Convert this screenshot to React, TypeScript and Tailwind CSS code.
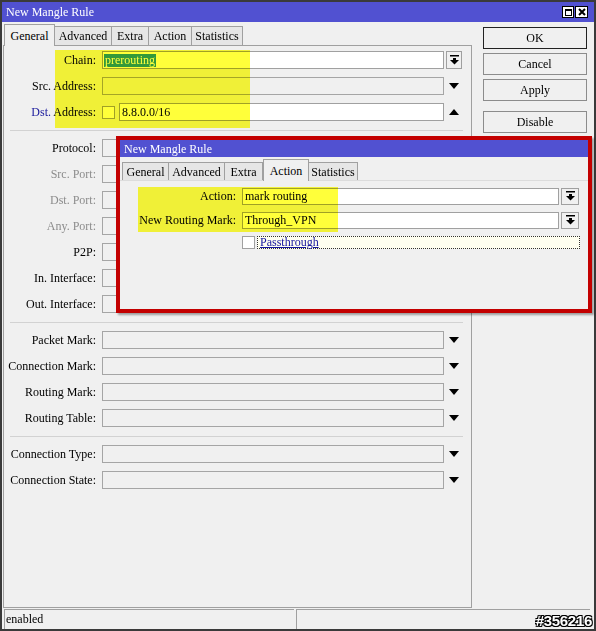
import React from "react";

const serif = "font-['Liberation_Serif',serif] text-[12px]";

function BarDown() {
  return (
    <svg width="9" height="10" viewBox="0 0 9 10">
      <rect x="0" y="0" width="9" height="1.5" fill="#000" />
      <rect x="3" y="3" width="3" height="2" fill="#000" />
      <polygon points="0,5 9,5 4.5,9.5" fill="#000" />
    </svg>
  );
}

function Tri({ up }: { up?: boolean }) {
  return (
    <svg width="10" height="6" viewBox="0 0 10 6">
      {up ? <polygon points="0,6 10,6 5,0" fill="#000" /> : <polygon points="0,0 10,0 5,6" fill="#000" />}
    </svg>
  );
}

function DropBtn({ h }: { h: string }) {
  return (
    <div className={`flex ${h} w-full items-center justify-center border border-[#a0a0a0] bg-[#f0f0f0]`}>
      <BarDown />
    </div>
  );
}

type ArrowKind = "btn" | "down" | "up";

function Row({
  label,
  gray,
  arrow = "down",
  children,
}: {
  label: React.ReactNode;
  gray?: boolean;
  arrow?: ArrowKind;
  children?: React.ReactNode;
}) {
  return (
    <div className="flex h-[26px] items-center">
      <div className={`w-[92px] whitespace-nowrap text-right ${gray ? "text-[#8c8c8c]" : "text-black"}`}>{label}</div>
      <div className="ml-[6px] flex h-[18px] w-[342px]">
        {children ?? <div className="h-full flex-1 border border-[#a5a5a5] bg-[#f0f0f0]" />}
      </div>
      <div className="ml-[2px] flex h-[18px] w-[16px] items-center justify-center">
        {arrow === "btn" ? <DropBtn h="h-[18px]" /> : <Tri up={arrow === "up"} />}
      </div>
    </div>
  );
}

function Divider() {
  return (
    <div className="flex h-[10px] items-center pl-[6px] pr-[8px]">
      <div className="h-0 w-full border-t border-[#d2d2d2]" />
    </div>
  );
}

function Tab({ label, w, active, small }: { label: string; w: string; active?: boolean; small?: boolean }) {
  if (active) {
    return (
      <div
        className={`relative z-10 -mb-px flex h-[22px] ${w} items-center justify-center border border-b-0 border-[#a0a0a0] bg-[#f0f0f0]`}
      >
        {label}
      </div>
    );
  }
  return (
    <div
      className={`flex ${small ? "h-[18px]" : "h-[19px]"} ${w} items-center justify-center border border-b-0 border-l-0 border-[#a0a0a0] bg-[#e6e6e6]`}
    >
      {label}
    </div>
  );
}

function TitleBar({ h, buttons }: { h: string; buttons?: boolean }) {
  return (
    <div className={`flex ${h} items-center justify-between bg-[#5151d1] pl-[2px] pr-[6px] text-white`}>
      <span className="pl-[2px]">New Mangle Rule</span>
      {buttons && (
        <div className="flex gap-[1px]">
          <div className="flex h-[12px] w-[12px] items-center justify-center border border-black bg-white">
            <div className="h-[7px] w-[7px] border border-black border-t-2" />
          </div>
          <div className="flex h-[12px] w-[13px] items-center justify-center border border-black bg-white">
            <svg width="8" height="8" viewBox="0 0 8 8">
              <path d="M1 1 L7 7 M7 1 L1 7" stroke="#000" strokeWidth="2" />
            </svg>
          </div>
        </div>
      )}
    </div>
  );
}

function InnerDialog() {
  return (
    <div className="absolute left-[114px] top-[134px] h-[177px] w-[476px] border-4 border-[#c30000] bg-[#f0f0f0] shadow-[2px_2px_2px_rgba(0,0,0,0.35)]">
      <TitleBar h="h-[17px]" />
      <div className="flex h-[23px] items-end pl-[2px]">
        <div className="flex h-[18px] w-[47px] items-center justify-center border border-b-0 border-[#a0a0a0] bg-[#e6e6e6]">General</div>
        <Tab label="Advanced" w="w-[56px]" small />
        <Tab label="Extra" w="w-[38px]" small />
        <Tab label="Action" w="w-[46px]" active small />
        <Tab label="Statistics" w="w-[49px]" small />
      </div>
      <div className="border-t border-[#dcdcdc]">
        <div className="pt-[3px]">
          <div className="flex h-[24px] items-center">
            <div className="w-[116px] text-right">Action:</div>
            <div className="ml-[6px] flex h-[17px] w-[317px] items-center border border-[#a0a0a0] bg-white pl-[2px]">mark routing</div>
            <div className="ml-[2px] w-[18px]">
              <DropBtn h="h-[17px]" />
            </div>
          </div>
          <div className="flex h-[24px] items-center">
            <div className="w-[116px] whitespace-nowrap text-right">New Routing Mark:</div>
            <div className="ml-[6px] flex h-[17px] w-[317px] items-center border border-[#a0a0a0] bg-white pl-[2px]">Through_VPN</div>
            <div className="ml-[2px] w-[18px]">
              <DropBtn h="h-[17px]" />
            </div>
          </div>
          <div className="flex h-[20px] items-center pl-[122px]">
            <div className="h-[13px] w-[13px] border border-[#a0a0a0] bg-white" />
            <div className="ml-[2px] flex h-[13px] w-[323px] items-center border border-dotted border-[#333] bg-[#fffff0] pl-[2px] leading-none text-[#1414a0] underline decoration-[#1414a0]">
              Passthrough
            </div>
          </div>
        </div>
      </div>
      <div className="pointer-events-none absolute left-[18px] top-[47px] h-[45px] w-[200px] bg-[#ffff3a] mix-blend-multiply" />
    </div>
  );
}

export default function App() {
  return (
    <div className={`relative h-[631px] w-[596px] border-2 border-[#3a3a3a] bg-[#f0f0f0] text-black ${serif}`}>
      <TitleBar h="h-[20px]" buttons />

      <div className="flex h-[586px]">
        {/* left: tabs + form */}
        <div className="w-[470px]">
          <div className="flex h-[23px] items-end pl-[2px]">
            <Tab label="General" w="w-[51px]" active />
            <Tab label="Advanced" w="w-[57px]" />
            <Tab label="Extra" w="w-[37px]" />
            <Tab label="Action" w="w-[43px]" />
            <Tab label="Statistics" w="w-[51px]" />
          </div>
          <div className="ml-[1px] h-[563px] w-[469px] border border-[#a0a0a0] pt-[1px]">
            <Row label="Chain:" arrow="btn">
              <div className="flex h-full flex-1 items-center border border-[#a0a0a0] bg-white pl-[1px]">
                <span className="bg-[#3399ff] px-[1px] leading-[13px] text-white">prerouting</span>
              </div>
            </Row>
            <Row label="Src. Address:" />
            <Row
              label={
                <>
                  <span className="text-[#1a1a9c]">Dst.</span> Address:
                </>
              }
              arrow="up"
            >
              <div className="mr-[2px] mt-[3px] h-[13px] w-[13px] border border-[#a0a0a0] bg-white" />
              <div className="ml-[2px] flex h-full flex-1 items-center border border-[#a0a0a0] bg-white pl-[2px]">8.8.0.0/16</div>
            </Row>
            <Divider />
            <Row label="Protocol:" />
            <Row label="Src. Port:" gray />
            <Row label="Dst. Port:" gray />
            <Row label="Any. Port:" gray />
            <Row label="P2P:" />
            <Row label="In. Interface:" />
            <Row label="Out. Interface:" />
            <Divider />
            <Row label="Packet Mark:" />
            <Row label="Connection Mark:" />
            <Row label="Routing Mark:" />
            <Row label="Routing Table:" />
            <Divider />
            <Row label="Connection Type:" />
            <Row label="Connection State:" />
          </div>
        </div>

        {/* right: buttons */}
        <div className="flex flex-col pl-[11px] pt-[5px]">
          <button className="h-[22px] w-[104px] border border-[#222] bg-[#f0f0f0]">OK</button>
          <button className="mt-[4px] h-[22px] w-[104px] border border-[#8c8c8c] bg-[#f0f0f0]">Cancel</button>
          <button className="mt-[4px] h-[22px] w-[104px] border border-[#8c8c8c] bg-[#f0f0f0]">Apply</button>
          <button className="mt-[10px] h-[22px] w-[104px] border border-[#8c8c8c] bg-[#f0f0f0]">Disable</button>
        </div>
      </div>

      {/* status bar */}
      <div className="mt-[1px] flex h-[20px] gap-[2px] pl-[2px]">
        <div className="w-[290px] border border-b-0 border-r-0 border-[#a0a0a0] pl-[1px] leading-[18px]">enabled</div>
        <div className="w-[294px] border border-b-0 border-r-0 border-[#a0a0a0]" />
      </div>

      {/* highlight on main form */}
      <div className="pointer-events-none absolute left-[53px] top-[48px] h-[78px] w-[195px] bg-[#ffff3a] mix-blend-multiply" />

      <InnerDialog />

      <div className="absolute bottom-[1px] right-[2px] font-['Liberation_Sans',sans-serif] text-[15px] font-bold leading-none tracking-[-0.3px] text-white [text-shadow:-1px_-1px_0_#000,1px_-1px_0_#000,-1px_1px_0_#000,1px_1px_0_#000,0_1px_0_#000,0_-1px_0_#000]">
        #356216
      </div>
    </div>
  );
}
